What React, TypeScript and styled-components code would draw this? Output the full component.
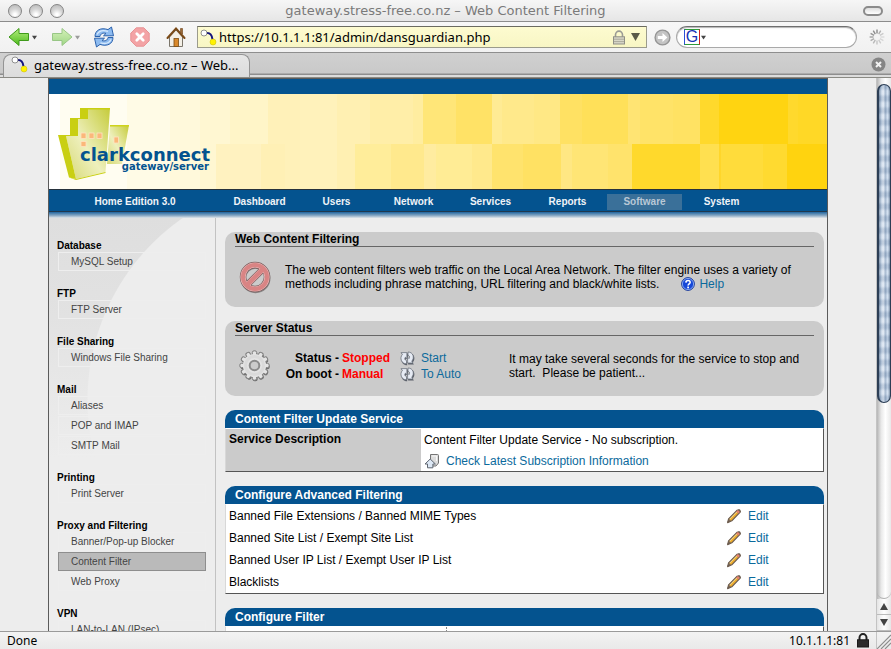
import React from "react";
import styled, { createGlobalStyle, css } from "styled-components";

const BLUE = "#04538f";
const LINK = "#0b6a9c";
const PAGE = "#ededed";

const GlobalStyle = createGlobalStyle`
  * { box-sizing: border-box; }
  body { margin: 0; background: #ededed; }
  button, input { font: inherit; color: inherit; margin: 0; }
  svg { display: block; flex: none; }
`;

/* ---------- browser window ---------- */

const Window = styled.div`
  display: flex;
  flex-direction: column;
  height: 100vh;
  overflow: hidden;
  font-family: "Noto Sans", "Open Sans", sans-serif;
  font-size: 13px;
  color: #000;
`;

const TitleBar = styled.header`
  display: grid;
  grid-template-columns: 80px 1fr 80px;
  align-items: center;
  height: 22px;
  padding: 0 8px;
  flex: none;
  background: linear-gradient(#f6f6f6, #e6e6e6);
  border-bottom: 1px solid #8c8c8c;
`;

const Lights = styled.div`
  display: flex;
  gap: 7px;
`;

const Light = styled.button`
  width: 14px;
  height: 14px;
  padding: 0;
  border: 1px solid #858585;
  border-radius: 50%;
  background: radial-gradient(circle at 50% 80%, #fff 10%, #d4d4d4 50%, #b4b4b4 100%);
`;

const WindowTitle = styled.h1`
  margin: 0;
  font-family: "DejaVu Sans", "Noto Sans", sans-serif;
  font-size: 13px;
  line-height: 20px;
  font-weight: 400;
  text-align: center;
  color: #7a7a7a;
  white-space: nowrap;
`;

const PillButton = styled.button`
  justify-self: end;
  width: 20px;
  height: 10px;
  padding: 0;
  border: 2px solid #8b8b8b;
  border-radius: 5px;
  background: linear-gradient(#ddd, #fff);
`;

const Toolbar = styled.nav`
  display: flex;
  align-items: center;
  height: 30px;
  padding: 0 6px 0 8px;
  flex: none;
  background: linear-gradient(#f7f7f7, #f1f1f1);
`;

const ToolButton = styled.button<{ $gap: number; $faded?: boolean }>`
  display: flex;
  align-items: center;
  gap: 2px;
  padding: 0;
  margin-right: ${(p) => p.$gap}px;
  border: 0;
  background: none;
  opacity: ${(p) => (p.$faded ? 0.5 : 1)};
`;

const AddressBar = styled.label`
  display: flex;
  align-items: center;
  flex: 1;
  height: 22px;
  padding: 0 2px;
  background: linear-gradient(#fdfbd0, #f8f6c4);
  border: 1px solid #9b9b8c;
  border-top-color: #6b6b60;
`;

const AddressInput = styled.input`
  flex: 1;
  min-width: 0;
  height: 18px;
  padding: 0 0 0 2px;
  border: 0;
  outline: 0;
  background: none;
  font-size: 13px;
`;

const GoButton = styled.button`
  padding: 0;
  margin: 0 5px 0 7px;
  border: 0;
  background: none;
`;

const SearchBox = styled.label`
  display: flex;
  align-items: center;
  gap: 2px;
  width: 181px;
  height: 22px;
  padding: 0 7px;
  margin-right: 12px;
  background: #fff;
  border: 1px solid #a9a9a9;
  border-top-color: #6f6f6f;
  border-radius: 11px;
  box-shadow: inset 0 1px 1px #b5b5b5;
`;

const EngineButton = styled.button`
  display: flex;
  align-items: center;
  gap: 1px;
  padding: 0;
  border: 0;
  background: none;
`;

const EngineLetter = styled.span`
  width: 16px;
  height: 16px;
  border: 1px solid;
  border-color: #2f9a3a #c22 #2f9a3a #2b50d8;
  font-family: "Liberation Sans", Arial, sans-serif;
  font-size: 16px;
  line-height: 14px;
  text-align: center;
  color: #1533b5;
`;

const SearchInput = styled.input`
  flex: 1;
  min-width: 0;
  height: 18px;
  border: 0;
  outline: 0;
  background: none;
`;

const TabBar = styled.div`
  display: flex;
  align-items: flex-end;
  justify-content: space-between;
  height: 26px;
  padding: 0 5px 0 3px;
  flex: none;
  background: linear-gradient(#d0d0d0, #c9c9c9 20px, #8e8e8e 21px, #8e8e8e 22px, #dcdcdc 22px);
  border-top: 1px solid #8e8e8e;
  border-bottom: 1px solid #8a8a84;
`;

const Tab = styled.button`
  display: flex;
  align-items: center;
  gap: 6px;
  width: 247px;
  height: 23px;
  padding: 0 8px 3px 7px;
  border: 1px solid #949494;
  border-bottom: 0;
  border-radius: 8px 8px 0 0;
  background: linear-gradient(#e6e6e6, #dcdcdc);
  font-size: 13px;
  line-height: 18px;
  white-space: nowrap;
`;

const TabClose = styled.button`
  align-self: center;
  padding: 0 0 2px;
  border: 0;
  background: none;
`;

const Viewport = styled.div`
  display: flex;
  flex: 1;
  min-height: 0;
  overflow: hidden;
  background: ${PAGE};
`;

const Canvas = styled.div`
  flex: 1;
  min-width: 0;
  font-family: "Liberation Sans", Arial, sans-serif;
  font-size: 12px;
`;

const ScrollBar = styled.div`
  display: flex;
  flex-direction: column;
  width: 15px;
  background: linear-gradient(90deg, #b5b5b5, #e9e9e9 30%, #fff 60%, #e8e8e8);
  border-left: 1px solid #c3c3c3;
`;

const ScrollTrack = styled.div`
  flex: 1;
  min-height: 0;
  padding-top: 6px;
  border-radius: 0 0 7px 7px;
  border-bottom: 1px solid #b0b0b0;
`;

const ScrollThumb = styled.div`
  height: 62%;
  border: 1px solid #2c3e55;
  border-left-width: 2px;
  border-radius: 7px;
  background:
    repeating-linear-gradient(rgba(60, 90, 130, 0.16) 0 3px, rgba(255, 255, 255, 0.12) 6px 9px, rgba(60, 90, 130, 0.16) 12px),
    linear-gradient(90deg, #7289a3, #c3d2e4 22%, #e6eef8 38%, #9fb3cb 58%, #d3e2f3 80%, #6c819b);
`;

const ScrollArrow = styled.button`
  display: flex;
  align-items: center;
  justify-content: center;
  height: 16px;
  padding: 0;
  border: 0;
  border-bottom: 1px solid #bcbcbc;
  background: linear-gradient(90deg, #e4e4e4, #fff 50%, #e6e6e6);
`;

const StatusBar = styled.footer`
  display: flex;
  align-items: center;
  height: 18px;
  padding-left: 7px;
  flex: none;
  background: linear-gradient(#f3f3f3, #e9e9e9);
  border-top: 1px solid #9a9a9a;
  font-size: 12px;
  line-height: 16px;
`;

const StatusHost = styled.span`
  margin: 0 6px 0 auto;
`;

const Grip = styled.span`
  margin-left: 6px;
  border-left: 1px solid #c4c4c4;
`;

/* ---------- web page ---------- */

const Page = styled.div`
  display: flex;
  flex-direction: column;
  max-width: 780px;
  min-height: 100%;
  margin: 0 auto;
  border: 1px solid #5b5b5b;
  border-bottom: 0;
`;

const TopStripe = styled.div`
  height: 15px;
  background: ${BLUE};
`;

const Banner = styled.div`
  position: relative;
  height: 95px;
  padding: 13px 8px 0;
`;

const BannerArt = styled.svg`
  position: absolute;
  inset: 0;
  width: 100%;
  height: 100%;
`;

const Logo = styled.svg`
  position: relative;
`;

const MenuBar = styled.nav`
  display: grid;
  grid-template-columns: 172px repeat(7, 77px) 1fr;
  padding: 4px 0 1px;
  background: ${BLUE};
  border-top: 1px solid #26323c;
  border-bottom: 1px solid #20384e;
  font-size: 10px;
  font-weight: 700;
  line-height: 16px;
  text-align: center;
  color: #f0f4f8;
`;

const MenuLink = styled.a<{ $active?: boolean }>`
  margin: 0 1px;
  color: ${(p) => (p.$active ? "#b9c8d6" : "#f0f4f8")};
  background: ${(p) => (p.$active ? "#3a7099" : "none")};
  text-decoration: none;
`;

const MenuShadow = styled.div`
  height: 6px;
  background: linear-gradient(#1f65a0, #8caac4 60%, #dfe5ea);
`;

const Columns = styled.div`
  display: grid;
  grid-template-columns: 166px 1fr;
  flex: 1;
`;

const Sidebar = styled.aside`
  display: flex;
  flex-direction: column;
  gap: 15px;
  padding: 21px 8px 20px;
  background:
    radial-gradient(circle at 260px 182px, ${PAGE} 221px, transparent 222px),
    linear-gradient(#dedede, #e2e2e2 100px, ${PAGE} 240px);
  font-size: 10px;
`;

const SideGroup = styled.section`
  padding-bottom: 1px;
`;

const SideHeading = styled.h2`
  margin: 0;
  font-size: 10px;
  line-height: 13px;
  font-weight: 700;
`;

const SideLink = styled.a<{ $active?: boolean }>`
  display: block;
  margin: 0 1px;
  padding: 0 12px;
  border: 1px solid #eeeeee;
  line-height: 17px;
  color: #444;
  text-decoration: none;

  & + & {
    margin-top: 1px;
  }

  ${(p) =>
    p.$active &&
    css`
      background: #bababa;
      border-color: #8e8e8e;
    `}
`;

const Main = styled.main`
  display: flex;
  flex-direction: column;
  gap: 14px;
  min-width: 0;
  padding: 14px 3px 0 9px;
  border-left: 1px solid #c2c2c2;
`;

const Panel = styled.section`
  min-height: 75px;
  padding: 0 10px;
  border-radius: 10px;
  background: #cbcbcb;
`;

const PanelTitle = styled.h2`
  margin: 0;
  border-bottom: 1px solid #666;
  font-size: 12px;
  line-height: 14px;
  font-weight: 700;
`;

const PanelBody = styled.div`
  display: flex;
  align-items: center;
  min-height: 60px;
  padding-left: 4px;
`;

const PanelText = styled.p`
  flex: 1;
  margin: 0 0 0 14px;
  line-height: 14px;
`;

const Link = styled.a`
  color: ${LINK};
  text-decoration: none;
`;

const InlineIcon = styled.span`
  display: inline-block;
  margin: 0 4px 0 22px;
  vertical-align: top;
  height: 14px;
`;

const StatusTable = styled.table`
  border-collapse: collapse;
  margin-left: 14px;
  line-height: 16px;

  th, td { padding: 0; white-space: nowrap; }
  th { text-align: right; min-width: 54px; }
  td:nth-child(2) { padding: 0 10px 0 3px; color: #f00; font-weight: 700; }
  td:nth-child(4) { padding-left: 6px; }
`;

const StatusNote = styled.p`
  flex: 1;
  margin: 0 10px 0 48px;
  line-height: 14px;
`;

const BoxTitle = styled.h2`
  margin: 0;
  padding: 0 10px;
  border-radius: 10px 10px 0 0;
  background: ${BLUE};
  font-size: 12px;
  line-height: 18px;
  font-weight: 700;
  color: #fff;
`;

const BoxTable = styled.table<{ $row: number }>`
  width: 100%;
  border-collapse: separate;
  border-spacing: 0;
  background: #fff;
  border: 1px solid #555;
  border-top-color: #fff;
  border-left-color: #d8d8d8;

  th, td {
    height: ${(p) => p.$row}px;
    padding: 0 3px;
    line-height: 14px;
    text-align: left;
    font-weight: 400;
  }
`;

const LabelCell = styled.th`
  && {
    width: 195px;
    padding: 3px 3px 0;
    vertical-align: top;
    background: #cbcbcb;
    font-weight: 700;
  }
`;

const ActionCell = styled.td`
  && {
    width: 97px;
    padding: 0;
  }
`;

const IconLink = styled.a`
  display: flex;
  align-items: center;
  gap: 6px;
  color: ${LINK};
  text-decoration: none;
`;

const FilterForm = styled.div`
  display: grid;
  grid-template-columns: 220px 1fr;
  height: 60px;
  border: 1px solid #555;
  border-top-color: #fff;
  border-left-color: #d8d8d8;
  background: #fff;
`;

const FilterField = styled.div`
  grid-column: 2;
  border-left: 1px dotted #888;
`;

/* ---------- icons ---------- */

const ArrowIcon = ({ flip }: { flip?: boolean }) => (
  <svg width="22" height="20" viewBox="0 0 22 20">
    <defs>
      <linearGradient id="leaf" x1="0" y1="0" x2="0" y2="1">
        <stop offset="0" stopColor="#b5ee7e" />
        <stop offset="1" stopColor="#4cba1c" />
      </linearGradient>
    </defs>
    <path
      d="M1 10 L11 1.5 V6.5 H20.5 V13.5 H11 V18.5 Z"
      transform={flip ? "translate(22 0) scale(-1 1)" : undefined}
      fill="url(#leaf)"
      stroke="#3f9a1a"
      strokeLinejoin="round"
    />
  </svg>
);

const Caret = () => (
  <svg width="5" height="5" viewBox="0 0 6 6">
    <path d="M0 1 H6 L3 5.5 Z" fill="#444" />
  </svg>
);

const ReloadIcon = () => (
  <svg width="22" height="22" viewBox="0 0 22 22">
    <g fill="#8dbbf0" stroke="#2c62ac" strokeWidth="1" strokeLinejoin="round">
      <path d="M2 10.5 C2 4 8 1.2 15 3.6 L18.5 1 L20.5 9.8 L10.5 9.8 L13 7.4 C10 6.6 7.6 7.4 7 10.5 Z" />
      <path d="M20 11.5 C20 18 14 20.8 7 18.4 L3.5 21 L1.5 12.2 L11.5 12.2 L9 14.6 C12 15.4 14.4 14.6 15 11.5 Z" />
    </g>
    <path d="M4 8.5 C6 4.5 10 3.8 15 5.4 M18 13.5 C16 17.5 12 18.2 7.5 16.8" fill="none" stroke="#d5e8fc" strokeWidth="1.3" />
  </svg>
);

const StopIcon = () => (
  <svg width="20" height="20" viewBox="0 0 20 20">
    <path d="M6.2 .8 H13.8 L19.2 6.2 V13.8 L13.8 19.2 H6.2 L.8 13.8 V6.2 Z" fill="#f3a3a5" stroke="#e79294" />
    <path d="M6.8 6.8 L13.2 13.2 M13.2 6.8 L6.8 13.2" stroke="#fff" strokeWidth="2.8" strokeLinecap="round" />
  </svg>
);

const HomeIcon = () => (
  <svg width="20" height="22" viewBox="0 0 20 22">
    <path d="M3.5 11 L10 4 L16.5 11 V20.5 H3.5 Z" fill="#f3efe6" stroke="#7b756a" />
    <path d="M14.5 2.5 H16.5 V8 L14.5 6 Z" fill="#9d6a35" stroke="#6b4219" strokeWidth=".6" />
    <path d="M1.5 12 L10 2.5 L18.5 12" fill="none" stroke="#7a4a18" strokeWidth="2" strokeLinecap="round" />
    <rect x="8" y="12.5" width="4.5" height="8" fill="#d9882b" stroke="#7b4b12" strokeWidth=".8" />
  </svg>
);

const SiteIcon = () => (
  <svg width="17" height="17" viewBox="0 0 17 17">
    <path d="M6.5 4 C10 3.5 12 6 12.5 10.5" fill="none" stroke="#12127c" strokeWidth="2" />
    <circle cx="4" cy="4" r="3" fill="#fff" stroke="#777" strokeWidth=".8" />
    <circle cx="13" cy="13" r="3" fill="#fff200" stroke="#c7b900" strokeWidth=".5" />
  </svg>
);

const PadlockIcon = ({ dark }: { dark?: boolean }) => (
  <svg width="14" height="15" viewBox="0 0 14 15">
    <path
      d="M3.5 8 V4.8 A3.5 3.7 0 0 1 10.5 4.8 V8"
      fill="none"
      stroke={dark ? "#222" : "#9a9a94"}
      strokeWidth={dark ? 2 : 1.6}
    />
    <rect x="1.5" y="6.8" width="11" height="7.2" fill={dark ? "#2b2b2b" : "#d9d8c9"} stroke={dark ? "#1b1b1b" : "#8f8f86"} />
    {!dark && <path d="M2 9.2 H12 M2 11.6 H12" stroke="#aaa99c" />}
  </svg>
);

const HistoryCaret = () => (
  <svg width="18" height="10" viewBox="0 0 18 10">
    <path d="M5 1 H14 L9.5 9 Z" fill="#5a5a48" />
  </svg>
);

const GoIcon = () => (
  <svg width="17" height="17" viewBox="0 0 17 17">
    <circle cx="8.5" cy="8.5" r="7.4" fill="#c4c4c4" stroke="#959595" strokeWidth="1.4" />
    <path d="M3.8 7 H8.5 V4 L13.4 8.5 L8.5 13 V10 H3.8 Z" fill="#fff" />
  </svg>
);

const SPOKES = ["#8a8a8a", "#b0b0b0", "#cacaca", "#dadada", "#d6d6d6", "#cccccc", "#c4c4c4", "#b8b8b8", "#adadad", "#a2a2a2", "#969696", "#8c8c8c"];

const Throbber = () => (
  <svg width="16" height="16" viewBox="0 0 16 16">
    {SPOKES.map((color, i) => (
      <path key={i} d="M8 .6 V4.6" stroke={color} strokeWidth="1.4" transform={`rotate(${i * 30} 8 8)`} />
    ))}
  </svg>
);

const CloseIcon = () => (
  <svg width="15" height="15" viewBox="0 0 15 15">
    <circle cx="7.5" cy="7.5" r="7" fill="#858585" />
    <path d="M5 5 L10 10 M10 5 L5 10" stroke="#f2f2f2" strokeWidth="2" />
  </svg>
);

const ForbiddenIcon = () => (
  <svg width="32" height="33" viewBox="0 0 32 33">
    <circle cx="16.5" cy="17.2" r="12.2" fill="none" stroke="#6a6464" strokeWidth="5.6" opacity=".7" />
    <circle cx="16" cy="16" r="12" fill="none" stroke="#7c5a5a" strokeWidth="6.4" />
    <path d="M8.4 23.6 L23.6 8.4" stroke="#7c5a5a" strokeWidth="6.4" />
    <circle cx="16" cy="16" r="12" fill="none" stroke="#efc2c2" strokeWidth="5.2" />
    <path d="M8 24 L24 8" stroke="#e5a5a5" strokeWidth="5.2" />
    <circle cx="16" cy="16" r="12" fill="none" stroke="#d98484" strokeWidth="4" />
    <path d="M8 24 L24 8" stroke="#d98484" strokeWidth="4" />
  </svg>
);

const TEETH = [0, 30, 60, 90, 120, 150];

const GearIcon = () => (
  <svg width="32" height="32" viewBox="0 0 32 32">
    <g transform="translate(.6 1.2)" fill="#6f6f6f">
      {TEETH.map((a) => (
        <rect key={a} x="13" y="1" width="5" height="29" rx="2" transform={`rotate(${a} 15.5 15.5)`} />
      ))}
    </g>
    <g fill="#e4e4e4" stroke="#7d7d7d" strokeWidth="1">
      {TEETH.map((a) => (
        <rect key={a} x="13.3" y=".8" width="4.4" height="29.4" rx="1.8" transform={`rotate(${a} 15.5 15.5)`} />
      ))}
    </g>
    <circle cx="15.5" cy="15.5" r="11.6" fill="#e4e4e4" />
    <circle cx="15.5" cy="15.5" r="9" fill="none" stroke="#dadada" strokeWidth="3" />
    <circle cx="15.5" cy="15.5" r="4.8" fill="#cbcbcb" stroke="#8b8b8b" strokeWidth="2" />
  </svg>
);

const CycleIcon = () => (
  <svg width="15" height="15" viewBox="0 0 15 15">
    <g transform="translate(.5 .9)" fill="#5c616b">
      <path d="M6.7 13.4 C1 13.4 -.8 7 2.4 3.6 L1 1.6 H7.4 V8.2 L5.8 6.6 C4.6 8.2 5.2 9.6 6.7 10 Z" />
      <path d="M8.3 1 C14 1 15.4 7 12.2 10.6 L13.4 12.6 H7.6 V6.2 L9.2 7.8 C10.4 6.2 9.8 4.8 8.3 4.4 Z" />
    </g>
    <g fill="#e6ebf4" stroke="#6d737e" strokeWidth=".8" strokeLinejoin="round">
      <path d="M6.5 12.8 C1.2 12.8 -.6 6.8 2.4 3.4 L1 1.6 H6.9 V7.6 L5.4 6.2 C4.2 8 5 9.2 6.5 9.4 Z" />
      <path d="M8 1 C13.2 1 14.8 6.8 11.8 10.2 L13 12 H7.6 V6.2 L9 7.6 C10.2 5.8 9.4 4.6 8 4.4 Z" />
    </g>
  </svg>
);

const HelpIcon = () => (
  <svg width="14" height="14" viewBox="0 0 14 14">
    <circle cx="7" cy="7" r="6.4" fill="#1648d8" stroke="#0d2c8c" strokeWidth=".8" />
    <circle cx="7" cy="7" r="5.6" fill="none" stroke="#9dbcf5" strokeWidth=".8" />
    <path d="M4.9 5.6 C5 2.8 9.2 2.9 9.1 5.4 C9 6.9 7.1 6.8 7.1 8.6" fill="none" stroke="#fff" strokeWidth="1.6" />
    <rect x="6.2" y="9.6" width="1.8" height="1.7" fill="#fff" />
  </svg>
);

const UpdateIcon = () => (
  <svg width="16" height="16" viewBox="0 0 16 16">
    <path d="M6.5 1.5 H13.5 Q14.5 1.5 14.5 2.5 V10 L12 13 H6.5 Z" fill="#dcdcdc" stroke="#747474" />
    <path d="M8 3 H12.5 V8" fill="none" stroke="#f8f8f8" />
    <path d="M6.2 6 L11.4 11 H8.9 V14.8 H3.5 V11 H1 Z" fill="#dde8f5" stroke="#5f6670" strokeLinejoin="round" />
  </svg>
);

const PencilIcon = () => (
  <svg width="16" height="16" viewBox="0 0 16 16">
    <path d="M1.6 14.6 L2.6 10.8 L11.2 2.2 Q13.8 .8 14.4 3.8 L5.8 12.8 Z" fill="#7a6858" stroke="#6b5a4c" strokeWidth="1.2" strokeLinejoin="round" />
    <path d="M4.2 12 L11.4 4.6" stroke="#f0ae2c" strokeWidth="2.2" />
    <path d="M3.6 11.2 L10.8 3.9" stroke="#fbe7a4" strokeWidth=".9" />
    <path d="M11.2 4.6 L12.9 2.9" stroke="#e8846f" strokeWidth="2.8" />
  </svg>
);

const GripIcon = () => (
  <svg width="14" height="17" viewBox="0 0 14 17">
    <path d="M0 17 L14 3 M4 17 L14 7 M8 17 L14 11" stroke="#8b8b8b" strokeWidth="1.1" />
  </svg>
);

/* ---------- banner artwork ---------- */

type Slab = [number, number, string];

const TOP_SLABS: Slab[] = [
  [0, 11, "#ffffff"], [11, 78, "#fffdf1"], [78, 121, "#fffbe6"], [121, 151, "#fff9db"], [151, 181, "#fff7d2"],
  [181, 219, "#fff5c8"], [219, 251, "#fff1b9"], [251, 288, "#fff2bb"], [288, 321, "#fff0b2"], [321, 364, "#ffeea8"],
  [364, 374, "#ffeda0"], [374, 407, "#ffe678"], [407, 443, "#ffe266"], [443, 453, "#ffeb94"], [453, 485, "#ffe98b"],
  [485, 511, "#ffe885"], [511, 533, "#ffe163"], [533, 579, "#ffe059"], [579, 591, "#ffe473"], [591, 624, "#ffe368"],
  [624, 651, "#ffe263"], [651, 670, "#ffd92c"], [670, 739, "#ffd411"], [739, 749, "#ffd92d"], [749, 778, "#ffd826"],
];

const LOW_SLABS: Slab[] = [
  [167, 212, "#fff2c0"], [212, 236, "#fff0b5"], [306, 342, "#ffed9a"], [342, 375, "#ffe98d"], [375, 387, "#ffeca0"],
  [387, 423, "#ffec95"], [423, 443, "#ffe98c"], [443, 474, "#ffe36d"], [474, 512, "#ffe163"], [512, 523, "#ffe783"],
  [523, 559, "#ffe575"], [559, 583, "#ffe36c"], [583, 651, "#ffd92c"], [651, 670, "#ffe050"], [670, 672, "#ffd62a"],
  [672, 714, "#ffdc3b"], [714, 738, "#ffda30"], [738, 778, "#ffd30f"],
];

const BannerPicture = () => (
  <BannerArt viewBox="0 0 778 95" preserveAspectRatio="none" shapeRendering="crispEdges" aria-hidden="true">
    {TOP_SLABS.map(([from, to, color]) => (
      <rect key={from} x={from} y="0" width={to - from} height="95" fill={color} />
    ))}
    {LOW_SLABS.map(([from, to, color]) => (
      <rect key={from} x={from} y="50" width={to - from} height="45" fill={color} />
    ))}
  </BannerArt>
);

const ClarkLogo = () => (
  <Logo width="160" height="76" viewBox="0 0 160 76" role="img" aria-label="clarkconnect gateway/server">
    <defs>
      <linearGradient id="tower" x1="1" y1="0" x2="0" y2="1">
        <stop offset="0" stopColor="#c5cb3a" />
        <stop offset=".55" stopColor="#eef0bd" />
        <stop offset="1" stopColor="#d6d873" />
      </linearGradient>
    </defs>
    <path d="M53 18 H72 L65 57 H50 Z" fill="url(#tower)" />
    <path d="M53 18 H72 V19.5 H53 Z" fill="#cfd31c" />
    <path d="M23 1 H53 L48.5 65 L19 72 L9 29 H21 V11 H23 Z" fill="url(#tower)" />
    <path d="M23 1 H53 V2.5 H31 V12 H21 V29 H9 L19 72 L12 70.5 L1 28 H13 V11 H23 Z" fill="#c9cf12" />
    <path d="M12 70.5 L19 72 L48.5 65 V66 L19 73 Z" fill="#c9cf12" />
    {[24, 32, 40].map((x) => (
      <rect key={x} x={x} y="26" width="5" height="5.5" fill="#fbb87a" stroke="#ffe4c0" strokeWidth=".8" />
    ))}
    <rect x="24" y="34.5" width="5" height="5" fill="#fbb87a" stroke="#ffe4c0" strokeWidth=".8" />
    <rect x="57" y="30" width="4.5" height="6" fill="#fbb87a" stroke="#ffe4c0" strokeWidth=".8" />
    <g fill={BLUE} fontFamily='"DejaVu Sans", "Noto Sans", sans-serif' fontWeight="700" textAnchor="end">
      <text x="153" y="54" fontSize="18">clarkconnect</text>
      <text x="152" y="63" fontSize="10">gateway/server</text>
    </g>
  </Logo>
);

/* ---------- content ---------- */

const MENU = ["Dashboard", "Users", "Network", "Services", "Reports", "Software", "System"];

const SIDE = [
  { title: "Database", links: ["MySQL Setup"] },
  { title: "FTP", links: ["FTP Server"] },
  { title: "File Sharing", links: ["Windows File Sharing"] },
  { title: "Mail", links: ["Aliases", "POP and IMAP", "SMTP Mail"] },
  { title: "Printing", links: ["Print Server"] },
  { title: "Proxy and Filtering", links: ["Banner/Pop-up Blocker", "Content Filter", "Web Proxy"] },
  { title: "VPN", links: ["LAN-to-LAN (IPsec)"] },
];

const FILTERS = [
  "Banned File Extensions / Banned MIME Types",
  "Banned Site List / Exempt Site List",
  "Banned User IP List / Exempt User IP List",
  "Blacklists",
];

const SERVICE = [
  { label: "Status -", value: "Stopped", action: "Start" },
  { label: "On boot -", value: "Manual", action: "To Auto" },
];

export default function App() {
  return (
    <Window>
      <GlobalStyle />
      <TitleBar>
        <Lights>
          <Light aria-label="Close window" />
          <Light aria-label="Minimise window" />
          <Light aria-label="Zoom window" />
        </Lights>
        <WindowTitle>gateway.stress-free.co.nz – Web Content Filtering</WindowTitle>
        <PillButton aria-label="Toggle toolbar" />
      </TitleBar>

      <Toolbar>
        <ToolButton $gap={14} aria-label="Back"><ArrowIcon /><Caret /></ToolButton>
        <ToolButton $gap={13} $faded aria-label="Forward"><ArrowIcon flip /><Caret /></ToolButton>
        <ToolButton $gap={15} aria-label="Reload"><ReloadIcon /></ToolButton>
        <ToolButton $gap={16} aria-label="Stop"><StopIcon /></ToolButton>
        <ToolButton $gap={11} aria-label="Home"><HomeIcon /></ToolButton>
        <AddressBar>
          <SiteIcon />
          <AddressInput aria-label="Address" defaultValue="https://10.1.1.1:81/admin/dansguardian.php" />
          <PadlockIcon />
          <ToolButton $gap={0} aria-label="Address history"><HistoryCaret /></ToolButton>
        </AddressBar>
        <GoButton aria-label="Go"><GoIcon /></GoButton>
        <SearchBox>
          <EngineButton aria-label="Search engine">
            <EngineLetter>G</EngineLetter>
            <Caret />
          </EngineButton>
          <SearchInput aria-label="Search" />
        </SearchBox>
        <Throbber />
      </Toolbar>

      <TabBar>
        <Tab><SiteIcon />gateway.stress-free.co.nz – Web...</Tab>
        <TabClose aria-label="Close tab"><CloseIcon /></TabClose>
      </TabBar>

      <Viewport>
        <Canvas>
          <Page>
            <TopStripe />
            <Banner>
              <BannerPicture />
              <ClarkLogo />
            </Banner>
            <MenuBar>
              <span>Home Edition 3.0</span>
              {MENU.map((name) => (
                <MenuLink key={name} href="#" $active={name === "Software"}>{name}</MenuLink>
              ))}
            </MenuBar>
            <MenuShadow />
            <Columns>
              <Sidebar>
                {SIDE.map((group) => (
                  <SideGroup key={group.title}>
                    <SideHeading>{group.title}</SideHeading>
                    {group.links.map((name) => (
                      <SideLink key={name} href="#" $active={name === "Content Filter"}>{name}</SideLink>
                    ))}
                  </SideGroup>
                ))}
              </Sidebar>
              <Main>
                <Panel>
                  <PanelTitle>Web Content Filtering</PanelTitle>
                  <PanelBody>
                    <ForbiddenIcon />
                    <PanelText>
                      The web content filters web traffic on the Local Area Network. The filter engine uses a variety of
                      methods including phrase matching, URL filtering and black/white lists.
                      <InlineIcon><HelpIcon /></InlineIcon>
                      <Link href="#">Help</Link>
                    </PanelText>
                  </PanelBody>
                </Panel>

                <Panel>
                  <PanelTitle>Server Status</PanelTitle>
                  <PanelBody>
                    <GearIcon />
                    <StatusTable>
                      <tbody>
                        {SERVICE.map((row) => (
                          <tr key={row.label}>
                            <th scope="row">{row.label}</th>
                            <td>{row.value}</td>
                            <td><CycleIcon /></td>
                            <td><Link href="#">{row.action}</Link></td>
                          </tr>
                        ))}
                      </tbody>
                    </StatusTable>
                    <StatusNote>
                      It may take several seconds for the service to stop and start.&nbsp; Please be patient...
                    </StatusNote>
                  </PanelBody>
                </Panel>

                <section>
                  <BoxTitle>Content Filter Update Service</BoxTitle>
                  <BoxTable $row={21}>
                    <tbody>
                      <tr>
                        <LabelCell scope="row" rowSpan={2}>Service Description</LabelCell>
                        <td>Content Filter Update Service - No subscription.</td>
                      </tr>
                      <tr>
                        <td>
                          <IconLink href="#"><UpdateIcon />Check Latest Subscription Information</IconLink>
                        </td>
                      </tr>
                    </tbody>
                  </BoxTable>
                </section>

                <section>
                  <BoxTitle>Configure Advanced Filtering</BoxTitle>
                  <BoxTable $row={22}>
                    <tbody>
                      {FILTERS.map((name) => (
                        <tr key={name}>
                          <td>{name}</td>
                          <ActionCell><IconLink href="#"><PencilIcon />Edit</IconLink></ActionCell>
                        </tr>
                      ))}
                    </tbody>
                  </BoxTable>
                </section>

                <section>
                  <BoxTitle>Configure Filter</BoxTitle>
                  <FilterForm><FilterField /></FilterForm>
                </section>
              </Main>
            </Columns>
          </Page>
        </Canvas>
        <ScrollBar>
          <ScrollTrack><ScrollThumb /></ScrollTrack>
          <ScrollArrow aria-label="Scroll up">
            <svg width="8" height="7" viewBox="0 0 8 7"><path d="M4 0 L8 7 H0 Z" fill="#444" /></svg>
          </ScrollArrow>
          <ScrollArrow aria-label="Scroll down">
            <svg width="8" height="7" viewBox="0 0 8 7"><path d="M4 7 L8 0 H0 Z" fill="#444" /></svg>
          </ScrollArrow>
        </ScrollBar>
      </Viewport>

      <StatusBar>
        <span>Done</span>
        <StatusHost>10.1.1.1:81</StatusHost>
        <PadlockIcon dark />
        <Grip><GripIcon /></Grip>
      </StatusBar>
    </Window>
  );
}
